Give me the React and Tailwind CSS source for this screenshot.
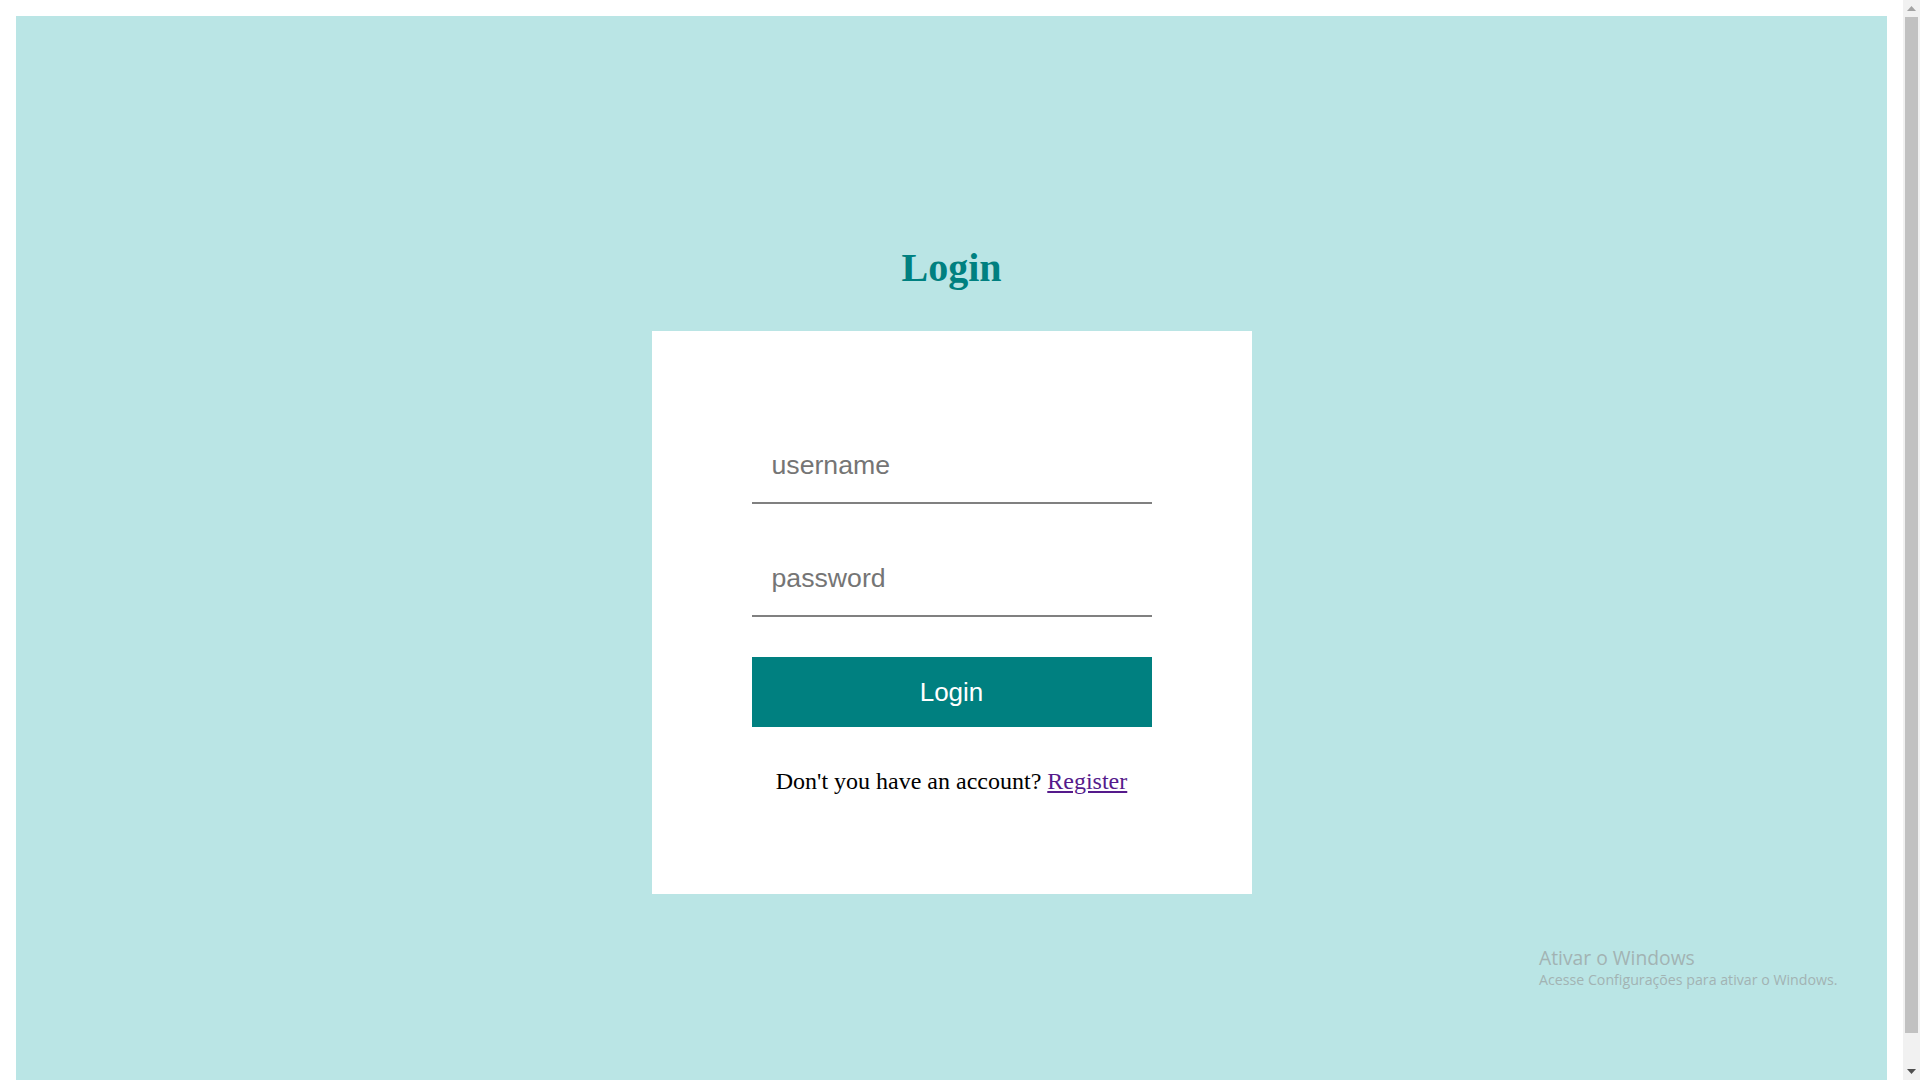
export default function App() {
  return (
    <div className="relative flex h-[1080px] w-full overflow-hidden bg-white">
      <div className="flex-1 pl-4 pr-4 pt-4">
        <div className="flex h-full flex-col items-center bg-[#bae5e5] pt-[232px]">
          <h1 className="text-[40px] font-bold leading-[40px] text-[#008080] [font-family:'Liberation_Serif',serif]">
            Login
          </h1>
          <div className="mt-[43px] flex w-[600px] flex-col items-center bg-white pb-[99px] pt-[96px]">
            <div className="flex w-[400px] flex-col">
              <input
                type="text"
                placeholder="username"
                className="h-[77px] w-full border-b-2 border-[#808080] bg-white pl-[20px] pt-[2px] text-[26.67px] text-black outline-none placeholder:text-[#757575] [font-family:'Liberation_Sans',Arial,sans-serif]"
              />
              <input
                type="password"
                placeholder="password"
                className="mt-[36px] h-[77px] w-full border-b-2 border-[#808080] bg-white pl-[20px] pt-[2px] text-[26.67px] text-black outline-none placeholder:text-[#757575] [font-family:'Liberation_Sans',Arial,sans-serif]"
              />
              <button className="mt-[40px] flex h-[70px] w-full items-center justify-center bg-[#008080] text-[26px] text-white [font-family:'Liberation_Sans',Arial,sans-serif]">
                Login
              </button>
            </div>
            <p className="mt-[40px] text-[24px] leading-[28px] text-black [font-family:'Liberation_Serif',serif]">
              Don't you have an account?{" "}
              <a href="#" className="text-[#551a8b] underline">
                Register
              </a>
            </p>
          </div>
        </div>
      </div>
      <div className="flex w-[17px] flex-col bg-[#f1f1f1]">
        <div className="flex h-[17px] items-center justify-center">
          <svg width="9" height="5" viewBox="0 0 9 5">
            <polygon points="4.5,0 9,5 0,5" fill="#a3a3a3" />
          </svg>
        </div>
        <div className="mx-[2px] h-[1016px] bg-[#c1c1c1]" />
        <div className="flex-1" />
        <div className="flex h-[17px] items-center justify-center">
          <svg width="9" height="5" viewBox="0 0 9 5">
            <polygon points="0,0 9,0 4.5,5" fill="#505050" />
          </svg>
        </div>
      </div>
      <div className="pointer-events-none absolute left-[1539px] top-[946px] text-[#a2b3b3] [font-family:'Open_Sans',sans-serif]">
        <div className="text-[19.3px] leading-[24px]">Ativar o Windows</div>
        <div className="text-[14.2px] leading-[20px]">Acesse Configurações para ativar o Windows.</div>
      </div>
    </div>
  );
}
